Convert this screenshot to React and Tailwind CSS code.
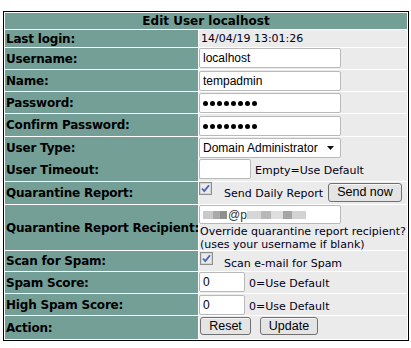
import React from "react";

const LF = "font-['DejaVu_Sans',Verdana,sans-serif]";
const LBL = "bg-[#739f97] flex items-center pl-px font-bold text-[12px] leading-[16px] tracking-[-0.2px] text-black whitespace-nowrap overflow-hidden " + LF;
const VAL = "bg-[#ebebeb] flex";
const SMALL = "text-[11px] leading-[13px] text-[#000018] whitespace-nowrap font-['DejaVu_Sans',Verdana,sans-serif]";
const INPUT = "bg-white border border-[#b9b9b9] rounded-[2px] flex items-center pl-[3px] text-[12px] text-black whitespace-nowrap font-['Liberation_Sans',Arial,sans-serif]";
const BTN = "bg-[#e4e4e4] border border-[#707070] rounded-[3px] flex items-center justify-center text-[12.5px] text-black whitespace-nowrap font-['Liberation_Sans',Arial,sans-serif] shadow-[inset_0_1px_0_#f6f6f6]";

function Check() {
  return (
    <svg width="13" height="13" viewBox="0 0 13 13" className="shrink-0">
      <rect x="0.5" y="0.5" width="12" height="12" fill="#e2e2e2" stroke="#8f8f8f" />
      <rect x="1.5" y="1.5" width="10" height="10" fill="#eaeaea" stroke="#d4d4d4" />
      <path d="M3 6.5 L5.3 9 L10 3.2" fill="none" stroke="#4a63b8" strokeWidth="1.8" />
    </svg>
  );
}

function Dots() {
  return (
    <div className="flex gap-[2px]">
      {Array.from({ length: 8 }).map((_, i) => (
        <span key={i} className="w-[5px] h-[5px] rounded-full bg-black" />
      ))}
    </div>
  );
}

export default function App() {
  return (
    <div className="w-[411px] h-[348px] bg-white pt-[11px] pl-[3px]">
      <div className="w-[406px] border border-black bg-white p-px">
        <div className="grid grid-cols-[193px_208px] gap-px">
          <div className={"col-span-2 h-[16px] bg-[#739f97] flex items-center justify-center font-bold text-[12px] text-black " + LF}>
            Edit User localhost
          </div>

          <div className={LBL + " h-[17px]"}>Last login:</div>
          <div className={VAL + " h-[17px] items-center pl-[2px]"}>
            <span className={SMALL}>14/04/19 13:01:26</span>
          </div>

          <div className={LBL + " h-[21px]"}>Username:</div>
          <div className={VAL + " h-[21px] items-start"}>
            <div className={INPUT + " w-[142px] h-[20px]"}>localhost</div>
          </div>

          <div className={LBL + " h-[21px]"}>Name:</div>
          <div className={VAL + " h-[21px] items-start"}>
            <div className={INPUT + " w-[142px] h-[20px] mt-px"}>tempadmin</div>
          </div>

          <div className={LBL + " h-[21px]"}>Password:</div>
          <div className={VAL + " h-[21px] items-start"}>
            <div className={INPUT + " w-[142px] h-[20px] mt-px"}><Dots /></div>
          </div>

          <div className={LBL + " h-[22px]"}>Confirm Password:</div>
          <div className={VAL + " h-[22px] items-start"}>
            <div className={INPUT + " w-[142px] h-[20px] mt-[2px]"}><Dots /></div>
          </div>

          <div className={"bg-[#739f97] h-[44px] flex flex-col justify-center pl-px font-bold text-[12px] tracking-[-0.2px] text-black whitespace-nowrap " + LF}>
            <div className="h-[22px] flex items-center">User Type:</div>
            <div className="h-[22px] flex items-center">User Timeout:</div>
          </div>
          <div className={VAL + " h-[44px] flex-col pt-[1px]"}>
            <div className={INPUT + " w-[142px] h-[20px] justify-between pr-[6px]"}>
              <span>Domain Administrator</span>
              <svg width="7" height="4" viewBox="0 0 7 4"><path d="M0 0 L7 0 L3.5 4 Z" fill="#111" /></svg>
            </div>
            <div className="flex items-center mt-[1px]">
              <div className={INPUT + " w-[52px] h-[20px]"} />
              <span className={SMALL + " ml-[4px] mt-[3px]"}>Empty=Use Default</span>
            </div>
          </div>

          <div className={LBL + " h-[22px]"}>Quarantine Report:</div>
          <div className={VAL + " h-[22px] items-start"}>
            <Check />
            <span className={SMALL + " ml-[12px] mt-[5px]"}>Send Daily Report</span>
            <div className={BTN + " w-[74px] h-[19px] ml-[5px] mt-px"}>Send now</div>
          </div>

          <div className={LBL + " h-[45px]"}>Quarantine Report Recipient:</div>
          <div className={VAL + " h-[45px] flex-col"}>
            <div className={INPUT + " w-[142px] h-[19px] gap-0"}>
              <span className="w-[10px] h-[8px] bg-[#c9c9c9]" />
              <span className="w-[7px] h-[8px] bg-[#a9a9a9]" />
              <span className="w-[7px] h-[8px] bg-[#8f8f8f]" />
              <span className="text-[#333] ml-[1px]">@p</span>
              <span className="w-[14px] h-[8px] bg-[#d6d6d6]" />
              <span className="w-[10px] h-[8px] bg-[#b8b8b8]" />
              <span className="w-[12px] h-[8px] bg-[#dedede]" />
              <span className="w-[9px] h-[8px] bg-[#a6a6a6]" />
              <span className="w-[14px] h-[8px] bg-[#d3d3d3]" />
            </div>
            <div className={SMALL + " pl-px mt-[1px]"}>Override quarantine report recipient?</div>
            <div className={SMALL + " pl-px"}>(uses your username if blank)</div>
          </div>

          <div className={LBL + " h-[20px]"}>Scan for Spam:</div>
          <div className={VAL + " h-[20px] items-start"}>
            <span className="mt-[1px] ml-px"><Check /></span>
            <span className={SMALL + " ml-[11px] mt-[6px]"}>Scan e-mail for Spam</span>
          </div>

          <div className={LBL + " h-[21px]"}>Spam Score:</div>
          <div className={VAL + " h-[21px] items-start"}>
            <div className={INPUT + " w-[46px] h-[20px]"}>0</div>
            <span className={SMALL + " ml-[4px] mt-[5px]"}>0=Use Default</span>
          </div>

          <div className={LBL + " h-[21px]"}>High Spam Score:</div>
          <div className={VAL + " h-[21px] items-start"}>
            <div className={INPUT + " w-[46px] h-[20px] mt-px"}>0</div>
            <span className={SMALL + " ml-[4px] mt-[6px]"}>0=Use Default</span>
          </div>

          <div className={LBL + " h-[23px]"}>Action:</div>
          <div className={VAL + " h-[23px] items-start"}>
            <div className={BTN + " w-[51px] h-[18px] ml-px mt-px"}>Reset</div>
            <div className={BTN + " w-[58px] h-[18px] ml-[9px] mt-px"}>Update</div>
          </div>
        </div>
      </div>
    </div>
  );
}
